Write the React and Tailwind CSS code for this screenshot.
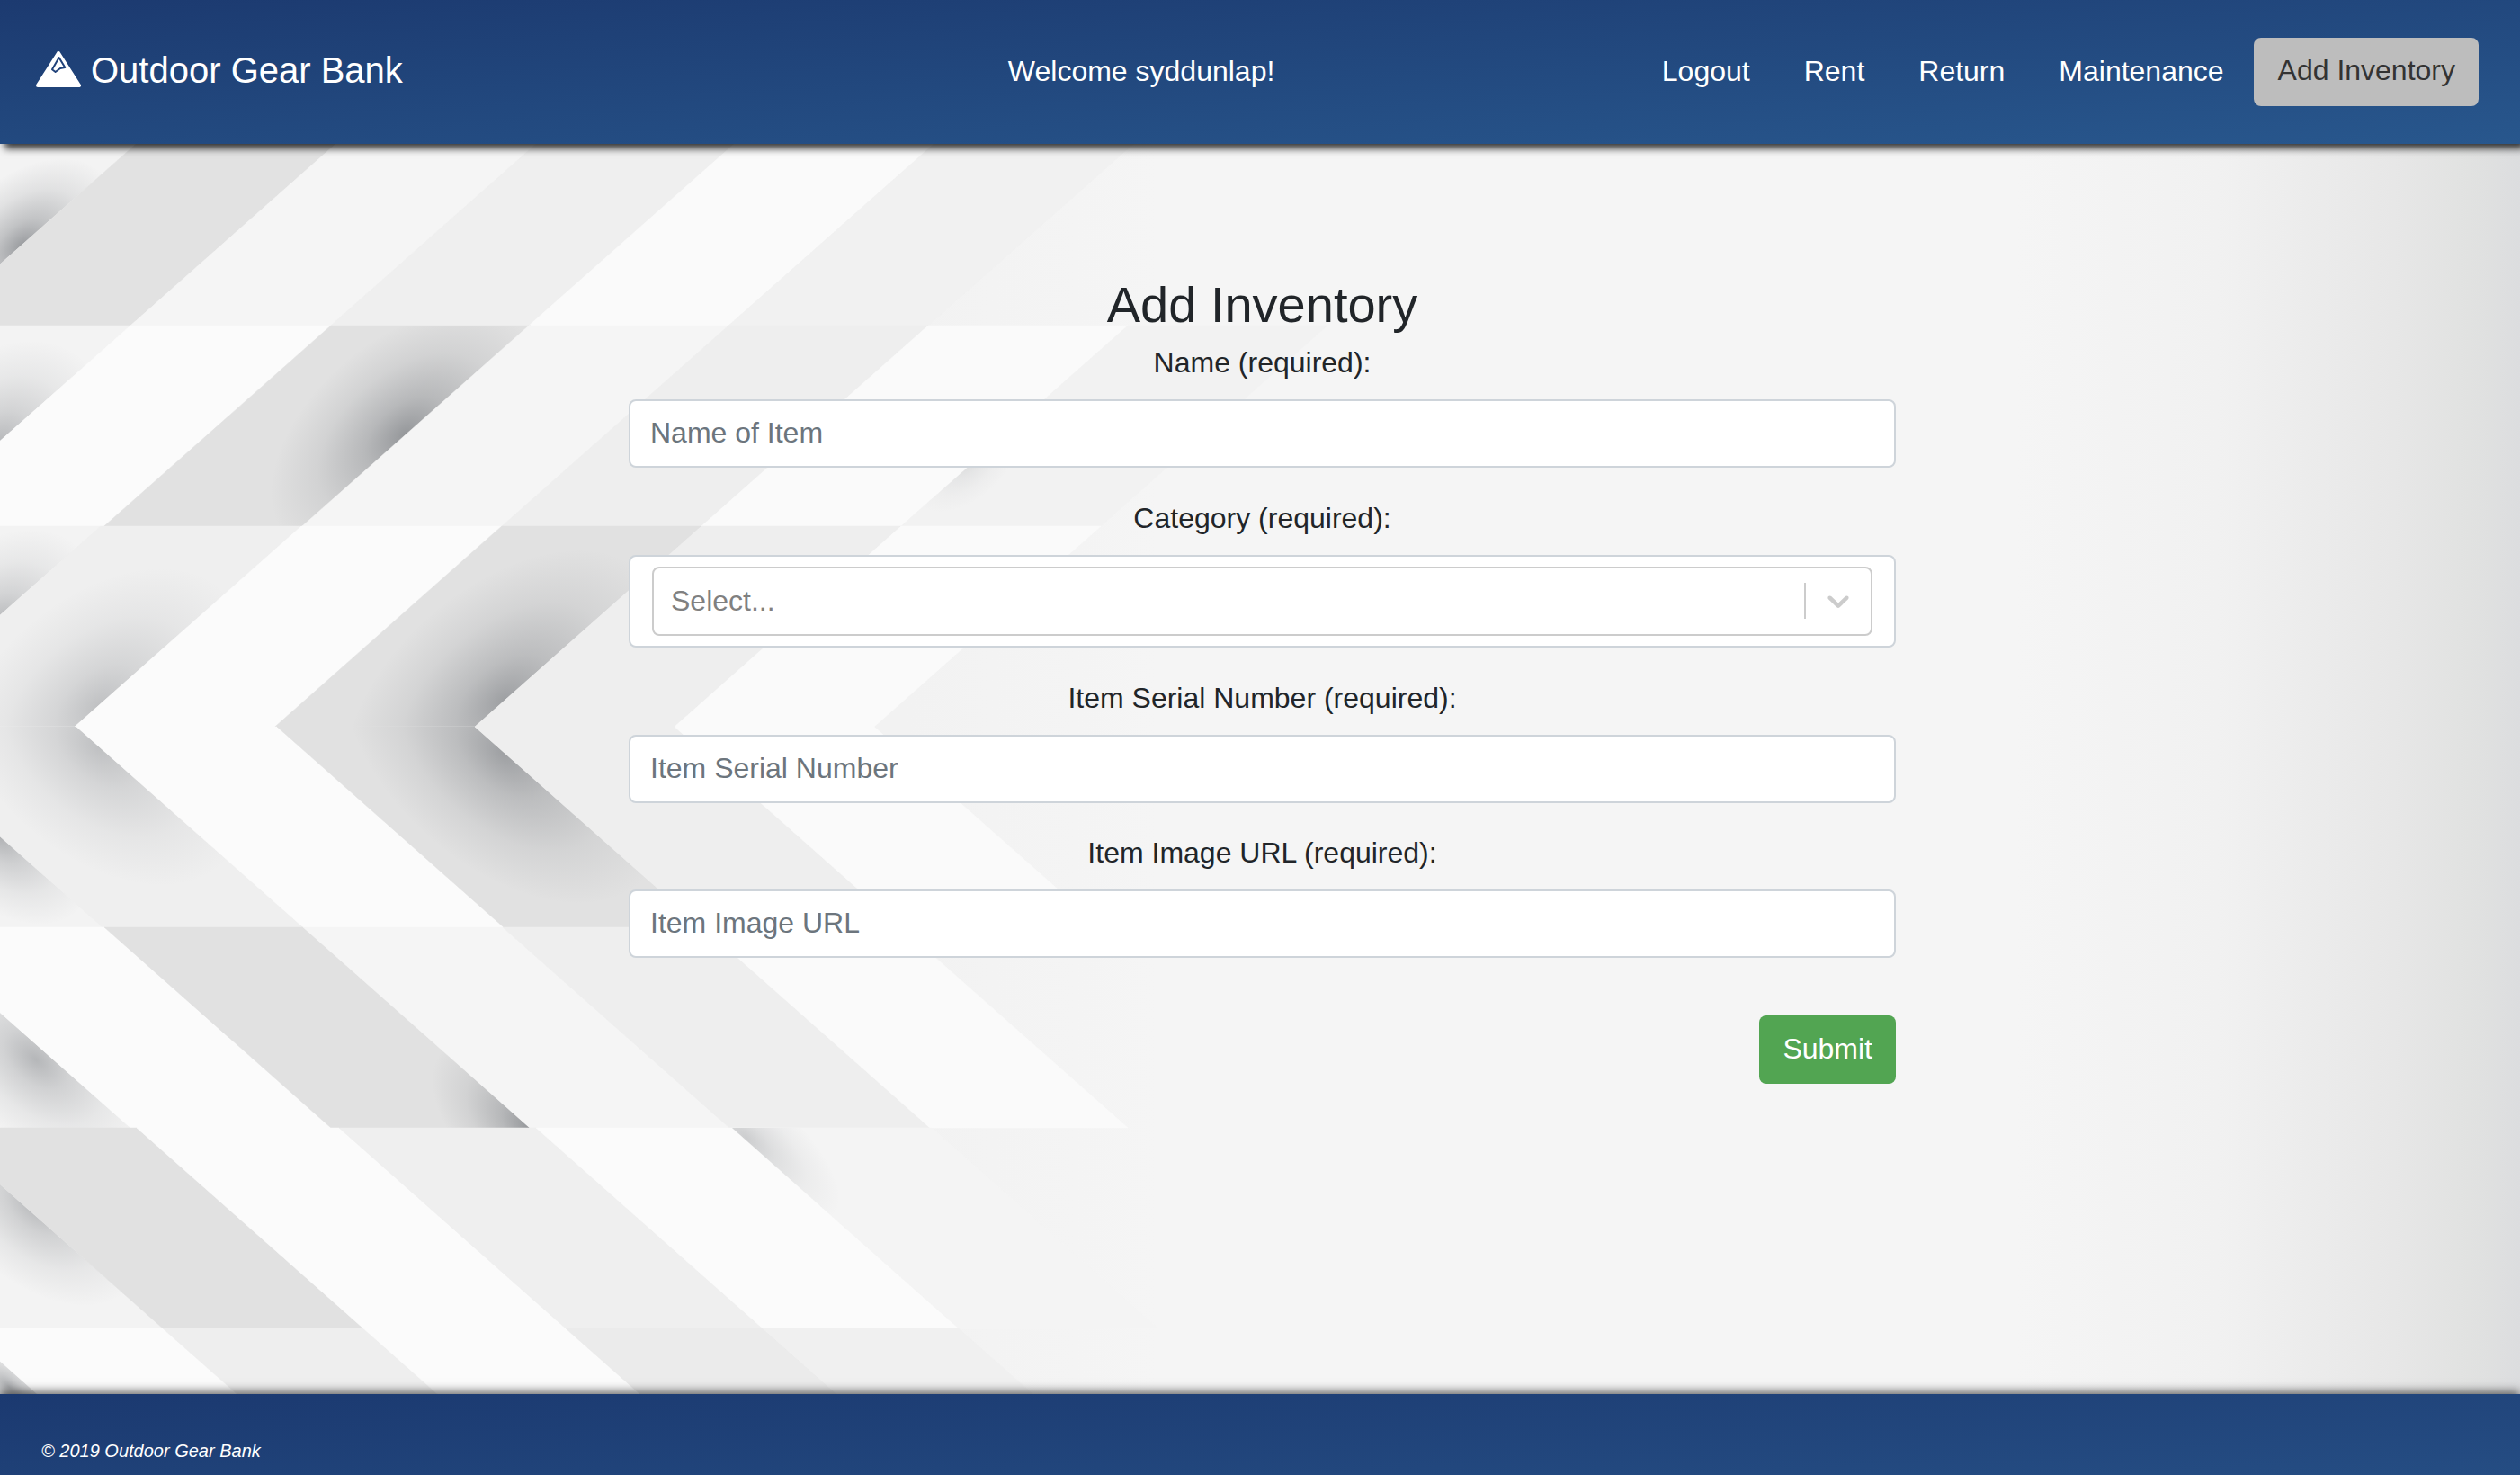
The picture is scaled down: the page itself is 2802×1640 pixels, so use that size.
// Add Inventory page — Outdoor Gear Bank
const SLOPE = 252 / 223

// one slanted piece of the chevron backdrop: dir -1 above the apex row, +1 below it
function piece(yT, yB, yRef, xRef, dir, fill, w = 222, shade = null) {
  const at = y => xRef + dir * (y - yRef) * SLOPE
  return { fill, shade, points: `${at(yT)},${yT} ${at(yT) + w},${yT} ${at(yB) + w},${yB} ${at(yB)},${yB}` }
}

const up = (yT, yB, yRef, list) => list.map(([x, fill, w, shade]) => piece(yT, yB, yRef, x, -1, fill, w, shade))
const down = (yT, yB, yRef, list) => list.map(([x, fill, w, shade]) => piece(yT, yB, yRef, x, 1, fill, w, shade))

const pieces = [
  ...up(160, 362, 362, [
    [-1077, '#f3f3f3', 1000, { cx: 25, cy: 273, rx: 120, ry: 75, rot: -41, a: 0.55 }],
    [-77, '#e2e2e2'], [145, '#f5f5f5'], [368, '#efefef'], [588, '#fafafa'], [810, '#f1f1f1'],
  ]),
  ...up(362, 585, 362, [
    [-855, '#f3f3f3', 1000, { cx: 0, cy: 490, rx: 130, ry: 95, rot: -41, a: 0.36 }],
    [145, '#fbfbfb'],
    [368, '#e1e1e1', 222, { cx: 450, cy: 483, rx: 175, ry: 105, rot: -41, a: 0.52 }],
    [588, '#f5f5f5'], [810, '#eeeeee'], [1032, '#fafafa'],
    [1254, '#f2f2f2', 222, { cx: 1075, cy: 515, rx: 70, ry: 40, rot: -41, a: 0.14 }],
  ]),
  ...up(585, 808, 585, [
    [-888, '#f3f3f3', 1000, { cx: 0, cy: 690, rx: 120, ry: 85, rot: -41, a: 0.36 }],
    [112, '#efefef', 223, { cx: 110, cy: 785, rx: 190, ry: 120, rot: -41, a: 0.3 }],
    [335, '#fbfbfb'],
    [558, '#e1e1e1', 222, { cx: 560, cy: 778, rx: 210, ry: 125, rot: -41, a: 0.46 }],
    [780, '#eeeeee'], [1002, '#fafafa'],
  ]),
  ...down(808, 1031, 1031, [
    [-886, '#f3f3f3', 1000, { cx: 0, cy: 931, rx: 120, ry: 75, rot: 41, a: 0.4 }],
    [114, '#efefef', 223, { cx: 110, cy: 831, rx: 190, ry: 120, rot: 41, a: 0.3 }],
    [337, '#fbfbfb', 223],
    [560, '#e1e1e1', 220, { cx: 560, cy: 838, rx: 210, ry: 125, rot: 41, a: 0.46 }],
    [780, '#eeeeee'], [1002, '#fafafa'],
  ]),
  ...down(1031, 1254, 1254, [
    [-855, '#f3f3f3', 1000, { cx: 40, cy: 1178, rx: 140, ry: 85, rot: 41, a: 0.38 }],
    [145, '#fbfbfb', 223],
    [368, '#e1e1e1', 221, { cx: 589, cy: 1254, rx: 130, ry: 72, rot: 41, a: 0.52 }],
    [589, '#f5f5f5'], [811, '#eeeeee', 223], [1034, '#fafafa', 220],
  ]),
  ...down(1254, 1477, 1477, [
    [-819, '#f3f3f3', 1000, { cx: 40, cy: 1340, rx: 140, ry: 85, rot: 41, a: 0.38 }],
    [181, '#e1e1e1', 223], [404, '#fbfbfb', 225], [629, '#efefef', 219], [848, '#fbfbfb', 218],
    [1066, '#f4f4f4', 222, { cx: 830, cy: 1265, rx: 130, ry: 52, rot: 41, a: 0.24 }],
  ]),
  ...down(1477, 1550, 1477, [
    [-1041, '#f3f3f3', 1000, { cx: 10, cy: 1542, rx: 65, ry: 32, rot: 41, a: 0.45 }],
    [-41, '#fbfbfb'], [181, '#eeeeee', 223], [404, '#fbfbfb', 225], [629, '#ebebeb', 219], [848, '#f0f0f0', 218],
  ]),
]

function Backdrop() {
  return (
    <svg className="absolute inset-0 w-full h-full" viewBox="0 160 2802 1390" preserveAspectRatio="none">
      <defs>
        <linearGradient id="base" gradientUnits="userSpaceOnUse" x1="0" y1="0" x2="2802" y2="0">
          <stop offset="0.36" stopColor="#f2f2f2" />
          <stop offset="0.46" stopColor="#f5f5f5" />
          <stop offset="0.8" stopColor="#f5f5f5" />
          <stop offset="0.88" stopColor="#f1f1f1" />
          <stop offset="0.95" stopColor="#e7e7e7" />
          <stop offset="0.98" stopColor="#e1e2e1" />
          <stop offset="1" stopColor="#dcdddf" />
        </linearGradient>
        <radialGradient id="soft">
          <stop offset="0" stopColor="#50545a" />
          <stop offset="0.3" stopColor="#50545a" stopOpacity="0.55" />
          <stop offset="0.65" stopColor="#50545a" stopOpacity="0.2" />
          <stop offset="1" stopColor="#50545a" stopOpacity="0" />
        </radialGradient>
      </defs>
      <rect x="0" y="160" width="2802" height="1390" fill="url(#base)" />
      {pieces.map((p, i) => (
        <g key={i}>
          <polygon points={p.points} fill={p.fill} stroke={p.fill} strokeWidth="0.5" />
          {p.shade && (
            <>
              <clipPath id={`cut-${i}`}>
                <polygon points={p.points} />
              </clipPath>
              <g clipPath={`url(#cut-${i})`}>
                <ellipse
                  cx={p.shade.cx}
                  cy={p.shade.cy}
                  rx={p.shade.rx}
                  ry={p.shade.ry}
                  transform={`rotate(${p.shade.rot} ${p.shade.cx} ${p.shade.cy})`}
                  fill="url(#soft)"
                  opacity={p.shade.a}
                />
              </g>
            </>
          )}
        </g>
      ))}
    </svg>
  )
}

function Logo() {
  return (
    <svg width="50" height="40" viewBox="0 0 50 40" className="shrink-0 -mt-[2px]">
      <path d="M25 2 L48 38 L2 38 Z" fill="#fff" stroke="#fff" strokeWidth="4" strokeLinejoin="round" />
      <path d="M25.6 7 L18 20.3 L21.6 23 L27 19 L32.3 18 Z" fill="none" stroke="#20427a" strokeWidth="2" strokeLinejoin="round" />
    </svg>
  )
}

function Field({ label, placeholder, className }) {
  return (
    <div className={className}>
      <label className="block text-center h-12 leading-[46px] mb-4">{label}</label>
      <input
        placeholder={placeholder}
        className="block w-full h-[76px] bg-white border-2 border-[#ced4da] rounded-lg pl-[22px] pb-[2px] text-[32px] outline-none placeholder:text-[#6c757d]"
      />
    </div>
  )
}

export default function App() {
  return (
    <div className="flex flex-col h-[1640px] overflow-hidden font-['Liberation_Sans',sans-serif] text-[32px] text-[#212529]">
      <header className="relative z-10 flex items-center h-40 shrink-0 pl-10 pr-[46px] text-white bg-[linear-gradient(177deg,#1c3a70,#28578d)] shadow-[5px_5px_8px_rgba(0,0,0,0.8)]">
        <a className="flex items-center gap-[11px] text-[40px] pb-[4px]">
          <Logo />
          Outdoor Gear Bank
        </a>
        <span className="ml-[673px] pb-[3px]">Welcome syddunlap!</span>
        <nav className="ml-auto flex items-center">
          <a className="px-[30px] pb-[3px]">Logout</a>
          <a className="px-[30px] pb-[3px]">Rent</a>
          <a className="px-[30px] pb-[3px]">Return</a>
          <a className="px-[30px] pb-[3px]">Maintenance</a>
          <a className="ml-[3px] h-[76px] leading-[73px] pl-[27px] pr-[26px] rounded-lg bg-[#bdbdbd] text-[#333333]">Add Inventory</a>
        </nav>
      </header>

      <main className="relative flex-1 overflow-hidden">
        <Backdrop />
        <form className="relative w-[1409px] ml-[699px] pt-[146px]">
          <h3 className="text-center text-[56px] h-[67px] leading-[65px] mb-[7px]">Add Inventory</h3>
          <Field label="Name (required):" placeholder="Name of Item" className="mb-[33px]" />

          <div className="mb-[33px]">
            <label className="block text-center h-12 leading-[46px] mb-4">Category (required):</label>
            <div className="h-[103px] bg-white border-2 border-[#ced4da] rounded-lg px-6 py-[11px]">
              <div className="flex items-center h-[77px] border-2 border-[#cccccc] rounded-lg pl-[19px] pr-[16px] pb-[1px]">
                <span className="flex-1 text-[#808080]">Select...</span>
                <span className="w-0.5 h-10 bg-[#cccccc]" />
                <svg width="40" height="40" viewBox="0 0 20 20" fill="#cccccc" className="ml-4">
                  <path d="M4.516 7.548c0.436-0.446 1.043-0.481 1.576 0l3.908 3.747 3.908-3.747c0.533-0.481 1.141-0.446 1.574 0 0.436 0.445 0.408 1.197 0 1.615-0.406 0.418-4.695 4.502-4.695 4.502-0.217 0.223-0.502 0.335-0.787 0.335s-0.57-0.112-0.789-0.335c0 0-4.287-4.084-4.695-4.502s-0.436-1.17 0-1.615z" />
                </svg>
              </div>
            </div>
          </div>

          <Field label="Item Serial Number (required):" placeholder="Item Serial Number" className="mb-8" />
          <Field label="Item Image URL (required):" placeholder="Item Image URL" className="mb-[64px]" />

          <div className="flex justify-end">
            <button type="button" className="h-[76px] px-[26px] pb-[2px] rounded-lg bg-[#52a552] text-white">Submit</button>
          </div>
        </form>
      </main>

      <footer className="relative z-10 h-[90px] shrink-0 pl-[46px] pt-[48px] text-[20px] leading-[30px] italic text-white bg-[linear-gradient(177deg,#1b3970,#254d83)] shadow-[0_-3px_10px_rgba(0,0,0,0.6)]">
        © 2019 Outdoor Gear Bank
      </footer>
    </div>
  )
}
